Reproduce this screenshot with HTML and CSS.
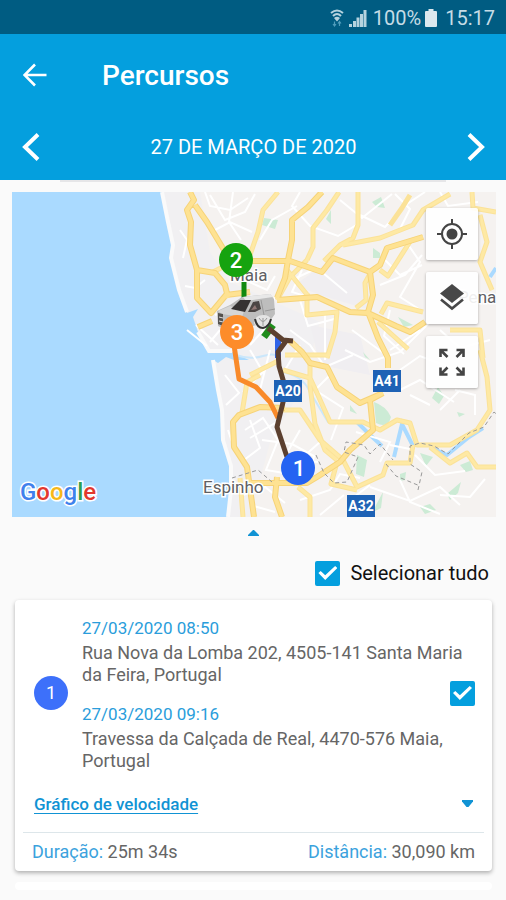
FILE: index.html
```html
<!DOCTYPE html>
<html lang="pt">

<head>
    <meta charset="UTF-8">
    <meta name="viewport" content="width=device-width, initial-scale=1.0">
    <title>Percursos</title>
    <link rel="stylesheet" href="styles.css">
</head>

<body>
    <div class="status-bar">
        <svg class="wifi" width="14" height="18" viewBox="0 0 14 18">
            <path d="M1 4Q7-1 13 4M3 7Q7 3 11 7" fill="none" stroke="#b5d3df" stroke-width="2" />
            <path d="M4 9q3-2.500 6 0l-3 3.500z" fill="#b5d3df" />
            <path d="M4.500 12.500v4M3 15l1.500 2L6 15M9.500 17v-4M8 14.500l1.500-2 1.500 2" fill="none" stroke="#4f9cbb" stroke-width="1.200" />
        </svg>
        <svg class="signal" width="18" height="18" viewBox="0 0 18 18">
            <path d="M0 15h3v3H0zM4 12h3v6H4zM7.500 8.500h3v9.500h-3zM11 5h3v13h-3zM14.500 1h3v17h-3z" fill="#b5d3df" />
        </svg>
        <span class="percent">100%</span>
        <svg class="battery" width="12" height="18" viewBox="0 0 12 18">
            <path d="M3.500 0h5v2H11q1 0 1 1v14q0 1-1 1H1q-1 0-1-1V3q0-1 1-1h2.500z" fill="#dbe8ee" />
        </svg>
        <span>15:17</span>
    </div>

    <header class="header">
        <div class="title-row">
            <button type="button" class="icon-button" aria-label="Voltar">
                <svg width="24" height="24" viewBox="0 0 24 24">
                    <path d="M23.500 12H2M12 1.500L1.500 12 12 22.500" fill="none" stroke="#fff" stroke-width="2.600" />
                </svg>
            </button>
            <h1>Percursos</h1>
        </div>
        <div class="date-row">
            <button type="button" class="icon-button" aria-label="Dia anterior">
                <svg width="18" height="28" viewBox="0 0 18 28">
                    <path d="M16 1.500L3 14l13 12.500" fill="none" stroke="#fff" stroke-width="4" />
                </svg>
            </button>
            <h2>27 DE MARÇO DE 2020</h2>
            <button type="button" class="icon-button" aria-label="Dia seguinte">
                <svg width="18" height="28" viewBox="0 0 18 28">
                    <path d="M2 1.500L15 14 2 26.500" fill="none" stroke="#fff" stroke-width="4" />
                </svg>
            </button>
        </div>
    </header>
    <div class="header-edge"></div>

    <main>
        <section class="map">
            <svg class="map-canvas" viewBox="12 192 484 325">
                <rect x="12" y="192" width="484" height="325" fill="#f5f2f0" />
                <!-- built-up areas -->
                <path d="M160 192h40l10 60 20 30 90 40-20 70-30 50-20 75h-60v-160l-30-60z" fill="#f1f0f2" />
                <path d="M330 260l40 15v35l-50-15-25-10zM310 325l50 10 10 40-50-10z" fill="#f0eef1" />
                <!-- parks -->
                <g fill="#ccebd5">
                    <path d="M264 218l14 2-3 9-13-4zM372 202l9-5 4 11-8-1zM331 210v14l-5-5zM373 248l7 5v5h-7zM398 317l15 8-9 2zM363 352l7 8-5-3z" />
                    <path d="M374 402q12 4 17 15-3 12-15 6zM438 387l6 9-5 8-7-6zM460 465l10-4 3 9-7 2zM420 453l13 4-7 9zM447 494l14-12-3 11-8 7zM420 507l10-3 6 6-11 4zM357 455l10 5-3 17-8-3zM376 505l7-13-2 16-8 4zM350 405l7 9-7-3zM457 412l8 2-6 3zM400 474l6-2-1 8-5 1z" />
                </g>
                <!-- sea and rivers -->
                <path d="M12 192H162L168 222 173 245 171 258 179 290 187 313 198 309 193 317 198 332 209 351 232 352 249 360 234 360 226 357 218 363 213 360 218 390 222 410 223 440 231 466 231 490 228 517H12z" fill="#aadaff" />
                <path d="M236 355q14 5 27 1t15 2M280 372q22 2 30 20l18 30h30" class="river" />
                <path d="M357 422L369 434 382 446M394 457L402 424 413 446M430 447l17 8 22-18 14-9M496 268l-6 9" class="river wide" />
                <path d="M162 192l6 30 5 23-2 13 8 32 8 22M198 332l11 19h23M213 360l5 30 4 20 1 30 8 26v24l-3 27" fill="none" stroke="#fafafa" stroke-width="4" />
                <!-- local streets -->
                <g class="streets">
                    <path d="M205 192l5 14 20 4 18-12M215 230l15-8 22 10M180 230l7 10-4 18M205 280l-10 8-10-2M210 195l15 25 20-8 10-18M233 192l-4 30 12 18M300 192l-8 14 18 20 28 10 20-12M340 200l22 18 30-24M360 215l25 12 22-23 18-12M395 194l15 15-10 20" />
                    <path d="M260 240l12-20 25-14M245 280l22 10 8-14M292 280l25-12 30 25M302 270l-10 22 32 10M385 260l15 15 22-10M380 285l25-10 17-20M405 240l15 22-20 35 22 14M440 192l8 14 30-4M325 315v45M352 330l30 22M300 300l8 26 30-8" />
                    <path d="M250 345l20-22M290 330l20 15 15 22 28-12M345 350l25 12 30-10 30-30M390 350l30-20M400 370l20-14 40 15M400 390l20-10 34 22M440 410l20-20M330 375l-15 15 28 18-12 32M250 350l13 22-20 20M270 350l-10 40 20 30-30 18M300 345l-15 25" />
                    <path d="M245 430l18-12 15 22-12 30 30 5M250 420l10 28-16 12M262 440l30 4 22 12-6 28M300 430l-16 28 34 4M320 442l-18 16M243 495l22-8 20 16M250 505l25 7M300 500l30-10 10-16 20 4M320 515l24-20M370 487l40 14 30-14 20 18M400 480l10 22 30 12M440 495l30 2 15-18M415 455l20 20 30-4" />
                    <path d="M356 432l34 10-10 20M390 445l25 5M455 390l20 5v20M430 405l-20-10M225 375l14 18-13 12M228 430l8 24M187 330l20 16M196 325l22 20M220 330l-10 12M440 330l20 18 30-8M350 500l20-15M280 290l-13 20M235 305l-20 10M390 310l-6 26 20 18" />
                </g>
                <!-- secondary roads -->
                <g id="roads">
                    <path class="minor-edge" d="M278 192L263 210 258 232 250 255M339 192L327 210 313 228V247L307 260M358 192V225L353 238 340 245 324 261M450 194L423 210 413 225 380 238 343 245M213 272L240 258M287 270L309 297M307 260L290 277M307 293V315L337 312 335 332 327 358M371 272L365 283 366 300 356 308M380 270L388 276 397 262 411 240M423 312L387 303 381 314M277 300L290 277M378 322L408 349M472 192L473 208 496 212M480 215L487 242 480 262 492 290M450 330H480L483 358M283 370L310 378 317 393 330 422H363L380 430 397 420 410 423 417 445H450L477 430 490 410 487 377 480 350M283 410H300L320 440 343 460 357 487 383 475 387 463H410L413 445M430 447L450 463 467 453 477 467H496M260 375L247 382 242 413M280 360L250 375M285 355H330M310 363V386L315 424 325 450 337 460M298 487L310 497V517M240 478L243 517M337 462L331 484 357 490M410 195L402 208 390 225" />
                    <path class="minor" d="M278 192L263 210 258 232 250 255M339 192L327 210 313 228V247L307 260M358 192V225L353 238 340 245 324 261M450 194L423 210 413 225 380 238 343 245M213 272L240 258M287 270L309 297M307 260L290 277M307 293V315L337 312 335 332 327 358M371 272L365 283 366 300 356 308M380 270L388 276 397 262 411 240M423 312L387 303 381 314M277 300L290 277M378 322L408 349M472 192L473 208 496 212M480 215L487 242 480 262 492 290M450 330H480L483 358M283 370L310 378 317 393 330 422H363L380 430 397 420 410 423 417 445H450L477 430 490 410 487 377 480 350M283 410H300L320 440 343 460 357 487 383 475 387 463H410L413 445M430 447L450 463 467 453 477 467H496M260 375L247 382 242 413M280 360L250 375M285 355H330M310 363V386L315 424 325 450 337 460M298 487L310 497V517M240 478L243 517M337 462L331 484 357 490" />
                    <!-- motorways -->
                    <path class="major-edge" d="M190 192L194 200 187 210 191 222 190 245 197 270V298L211 313 226 295 250 292M197 270L215 273 225 285 228 298M195 205L207 222 224 250M322 192L308 207 292 220V240L288 260 285 278 277 298M423 237L387 248 380 265 370 272 333 258 322 272 290 261H250M370 272L373 295 368 312 378 338 388 358V368M383 393L370 400 373 430 350 450 340 462 317 477 307 483H250M277 300L317 297 350 312 368 313 396 326 410 332 425 322M290 341L302 352 310 363 327 367 337 387 360 403 383 393M277 477L275 497 282 517M285 408L260 407 239 415 233 422 234 447 247 467 254 517M198 327L212 321" />
                    <path class="major" d="M190 192L194 200 187 210 191 222 190 245 197 270V298L211 313 226 295 250 292M197 270L215 273 225 285 228 298M195 205L207 222 224 250M322 192L308 207 292 220V240L288 260 285 278 277 298M423 237L387 248 380 265 370 272 333 258 322 272 290 261H250M370 272L373 295 368 312 378 338 388 358V368M383 393L370 400 373 430 350 450 340 462 317 477 307 483H250M277 300L317 297 350 312 368 313 396 326 410 332 425 322M290 341L302 352 310 363 327 367 337 387 360 403 383 393M277 477L275 497 282 517M285 408L260 407 239 415 233 422 234 447 247 467 254 517M198 327L212 321" />
                </g>
                <!-- municipal borders -->
                <path class="border" d="M232 478L258 470 272 482M316 455l8 18 10 10 13-1 11-25-14-5 2-10 18 3 6 9 10-10 13 16M386 464l10 12 24 10M418 490l4-18-12-8v-18l10-3 14 3 14 8 21-21 15-6 10-15 6 5" />

                <!-- place names -->
                <text class="place" x="230" y="281">Maia</text>
                <text class="place" x="203" y="493">Espinho</text>
                <text class="place" x="458" y="303">Pena</text>

                <!-- routes -->
                <g fill="none" stroke-linejoin="round">
                    <path d="M244 282V306" stroke="#12890f" stroke-width="5" />
                    <path d="M278 337V358" stroke="#2f63e8" stroke-width="6" />
                    <path d="M234 345L239 379 256 387 270 402 278 418" stroke="#f98a2a" stroke-width="5" />
                    <path d="M264 337L273 325" stroke="#1f8c1c" stroke-width="7" />
                    <path d="M268 328L283 340 293 341M286 341L278 352 279 366 286 390 277 427 287 457" stroke="#5c402f" stroke-width="5" />
                </g>

                <!-- van -->
                <path d="M217 311L230 305 242 297 270 294 274 299 275 314 270 321 253 326 226 330 218 326z" fill="#bdbdbd" />
                <path d="M243 297l27-3 3 3-27 4z" fill="#e8e8e8" />
                <path d="M218 311l12-5 14 5-2 6-20-3z" fill="#d6d6d6" />
                <path d="M231 309L240 300 251 300 245 312z" fill="#353232" />
                <path d="M248 312l5-10 6-1 2 8-6 3z" fill="#4b4544" />
                <path d="M251 310l4-5 2 4z" fill="#8f7674" />
                <path d="M218 313l5 1v12l-5-2z" fill="#55524f" />
                <path d="M219 317l4 1M219 321l4 1" stroke="#e0e0e0" stroke-width="1" />
                <path d="M261 300l3 15M265 311l10-2" fill="none" stroke="#9a9a9a" stroke-width="1" />
                <path d="M254 323q1-8 9-8 7 0 8 5-2 8-9 8-6 0-8-5z" fill="#e4e4e4" />
                <path d="M255 319q2 9 8 9 6-1 8-9" fill="none" stroke="#333" stroke-width="2" />
                <path d="M259 318q4 7 8 0M263 318v8" fill="none" stroke="#999" stroke-width="1" />

                <!-- road shields -->
                <g class="shield">
                    <rect x="274" y="380" width="28" height="22" />
                    <text x="288" y="396">A20</text>
                    <rect x="373" y="370" width="28" height="22" />
                    <text x="387" y="386">A41</text>
                    <rect x="347" y="495" width="28" height="22" />
                    <text x="361" y="511">A32</text>
                </g>

                <!-- stops -->
                <g class="pin">
                    <circle cx="236" cy="260" r="17" fill="#16a30f" />
                    <text x="236" y="268">2</text>
                    <circle cx="237" cy="332" r="17" fill="#fd8c2a" />
                    <text x="237" y="340">3</text>
                    <circle cx="298" cy="468" r="17" fill="#2563f2" />
                    <text x="299" y="476">1</text>
                </g>

                <text class="google" x="20" y="500"><tspan fill="#4081ec">G</tspan><tspan fill="#e2382f">o</tspan><tspan fill="#f6b81a">o</tspan><tspan fill="#4081ec">g</tspan><tspan fill="#2f9e4f">l</tspan><tspan fill="#e2382f">e</tspan></text>
            </svg>

            <div class="map-controls">
                <button type="button" aria-label="A minha localização">
                    <svg width="30" height="30" viewBox="0 0 30 30">
                        <circle cx="15" cy="15" r="10" fill="none" stroke="#444" stroke-width="2" />
                        <circle cx="15" cy="15" r="5.500" fill="#444" />
                        <path d="M15 0v5M15 25v5M0 15h5M25 15h5" stroke="#444" stroke-width="2" />
                    </svg>
                </button>
                <button type="button" aria-label="Camadas">
                    <svg width="26" height="28" viewBox="0 0 26 28">
                        <path d="M13 0L25 9.500 13 19 1 9.500z" fill="#484848" />
                        <path d="M2 15.500l11 9 11-9" fill="none" stroke="#484848" stroke-width="2.600" />
                    </svg>
                </button>
                <button type="button" aria-label="Ecrã inteiro">
                    <svg width="26" height="28" viewBox="0 0 26 28">
                        <path d="M1.500 9V2H8.500M2 2.500l6.500 6.500M24.500 9V2H17.500M24 2.500l-6.500 6.500M1.500 19.500v7H8.500M2 26l6.500-6.500M24.500 19.500v7H17.500M24 26l-6.500-6.500" fill="none" stroke="#444" stroke-width="2.600" />
                    </svg>
                </button>
            </div>
        </section>

        <button type="button" class="collapse" aria-label="Recolher mapa">
            <svg width="11" height="6" viewBox="0 0 11 6">
                <path d="M0 6V5l5-5h1l5 5v1z" fill="#1193d4" />
            </svg>
        </button>

        <label class="select-all">
            <input type="checkbox" class="check" checked>
            Selecionar tudo
        </label>

        <article class="card">
            <div class="trip">
                <span class="number">1</span>
                <div class="stops">
                    <div class="stop">
                        <time>27/03/2020 08:50</time>
                        <p>Rua Nova da Lomba 202, 4505-141 Santa Maria da Feira, Portugal</p>
                    </div>
                    <div class="stop">
                        <time>27/03/2020 09:16</time>
                        <p>Travessa da Calçada de Real, 4470-576 Maia, Portugal</p>
                    </div>
                </div>
                <input type="checkbox" class="check" aria-label="Selecionar percurso 1" checked>
            </div>
            <div class="chart-row">
                <a href="#grafico">Gráfico de velocidade</a>
                <button type="button" class="expand" aria-label="Mostrar gráfico">
                    <svg width="11" height="7" viewBox="0 0 11 7">
                        <path d="M0 0h11v1.500L6.500 7h-2L0 1.500z" fill="#1193d4" />
                    </svg>
                </button>
            </div>
            <div class="totals">
                <span><b>Duração:</b> 25m 34s</span>
                <span><b>Distância:</b> 30,090 km</span>
            </div>
        </article>
        <article class="card next"></article>
    </main>
</body>

</html>
```

FILE: styles.css
```css
* {
    box-sizing: border-box;
}

body {
    font-family: Roboto, "Liberation Sans", sans-serif;
    margin: 0;
    background-color: #fafafa;
    color: #666;
}

h1,
h2,
p {
    margin: 0;
}

svg {
    display: block;
}

button {
    display: flex;
    align-items: center;
    justify-content: center;
    padding: 0;
    border: none;
    background: none;
    cursor: pointer;
}

.status-bar {
    display: flex;
    align-items: center;
    justify-content: flex-end;
    height: 34px;
    padding: 2px 11px 0 0;
    background-color: #005c82;
    color: #c5dce6;
    font-size: 20px;
}

.signal {
    margin: 0 6px 0 5px;
}

.battery {
    margin: 0 8px 0 4px;
}

.header {
    background-color: #049fde;
    color: white;
}

.title-row {
    display: flex;
    align-items: center;
    gap: 55px;
    height: 80px;
    padding: 2px 23px 0;
}

.title-row h1 {
    font-size: 28px;
    font-weight: 500;
}

.date-row {
    display: flex;
    align-items: center;
    justify-content: space-between;
    height: 66px;
    padding: 0 21px 0 22px;
}

.date-row h2 {
    font-size: 20px;
    font-weight: 400;
}

.header-edge {
    height: 2px;
    margin: 0 60px;
    background-color: #e6e6e8;
}

.map {
    position: relative;
    margin: 10px 10px 0 12px;
}

.map-canvas {
    width: 100%;
    height: auto;
}

.river {
    fill: none;
    stroke: #cbe7fb;
    stroke-width: 2px;
}

.wide {
    stroke: #aadaff;
    stroke-width: 4px;
}

.streets {
    fill: none;
    stroke: #fff;
    stroke-width: 2px;
}

.minor,
.minor-edge,
.major,
.major-edge {
    fill: none;
    stroke-linejoin: round;
}

.minor-edge {
    stroke: #fbe298;
    stroke-width: 5px;
}

.minor {
    stroke: #fee9a4;
    stroke-width: 3px;
}

.major-edge {
    stroke: #f6d378;
    stroke-width: 6px;
}

.major {
    stroke: #fee292;
    stroke-width: 4px;
}

.border {
    fill: none;
    stroke: #999;
    stroke-width: 1px;
    stroke-dasharray: 4 3;
}

.place {
    fill: #5f5f63;
    stroke: #fff;
    stroke-width: 3px;
    paint-order: stroke;
    font-size: 17px;
}

.shield rect {
    fill: #1e62b5;
}

.shield text {
    fill: #fff;
    font-size: 14px;
    font-weight: 700;
    text-anchor: middle;
}

.pin text {
    fill: #fff;
    font-size: 22px;
    font-weight: 500;
    text-anchor: middle;
}

.google {
    stroke: #fff;
    stroke-width: 3px;
    paint-order: stroke;
    font-size: 24px;
    font-weight: 500;
}

.map-controls {
    position: absolute;
    top: 16px;
    right: 18px;
    display: flex;
    flex-direction: column;
    gap: 12px;
}

.map-controls button {
    width: 52px;
    height: 52px;
    border-radius: 2px;
    background-color: rgba(255, 255, 255, 0.9);
    box-shadow: 0 1px 3px rgba(0, 0, 0, 0.3);
}

.collapse {
    width: 100%;
    height: 32px;
}

.select-all {
    display: flex;
    align-items: center;
    justify-content: flex-end;
    gap: 10px;
    height: 48px;
    padding-right: 17px;
    color: #111;
    font-size: 20px;
}

.check {
    appearance: none;
    display: grid;
    place-items: center;
    width: 25px;
    height: 25px;
    margin: 0;
    border: 2px solid #049fde;
    border-radius: 2px;
}

.check:checked {
    background-color: #049fde;
}

.check:checked::after {
    content: "";
    width: 19px;
    height: 14px;
    background-color: #fff;
    clip-path: polygon(0 50%, 12% 36%, 36% 66%, 88% 0, 100% 14%, 36% 100%);
}

.card {
    margin: 3px 14px 0 15px;
    border-radius: 4px;
    background-color: #fff;
    box-shadow: 0 2px 4px rgba(0, 0, 0, 0.3);
}

.trip {
    display: grid;
    grid-template-columns: 34px 1fr;
    column-gap: 14px;
    align-items: center;
    padding: 14px 17px 0 19px;
}

.number {
    height: 34px;
    border-radius: 50%;
    background-color: #3d70fa;
    color: #fff;
    font-size: 18px;
    line-height: 34px;
    text-align: center;
}

.stops,
.trip .check {
    grid-row: 1;
    grid-column: 2;
}

.trip .check {
    justify-self: end;
}

.stop + .stop {
    margin-top: 14px;
}

.stop time {
    display: block;
    color: #2a9ddb;
    font-size: 17px;
    line-height: 28px;
}

.stop p {
    font-size: 18px;
    line-height: 22px;
}

.chart-row {
    display: flex;
    align-items: center;
    justify-content: space-between;
    height: 60px;
    padding: 3px 19px 0;
}

.chart-row a {
    color: #1193d4;
    font-size: 17px;
    font-weight: 500;
    text-underline-offset: 3px;
    text-decoration-thickness: 1px;
}

.totals {
    display: flex;
    align-items: center;
    justify-content: space-between;
    height: 39px;
    margin: 0 8px;
    padding: 0 9px 2px;
    border-top: 1px solid #dde6ea;
    font-size: 18px;
}

.totals b {
    color: #3ba2dd;
    font-weight: 400;
}

.next {
    height: 8px;
    margin-top: 11px;
    box-shadow: none;
}
```
